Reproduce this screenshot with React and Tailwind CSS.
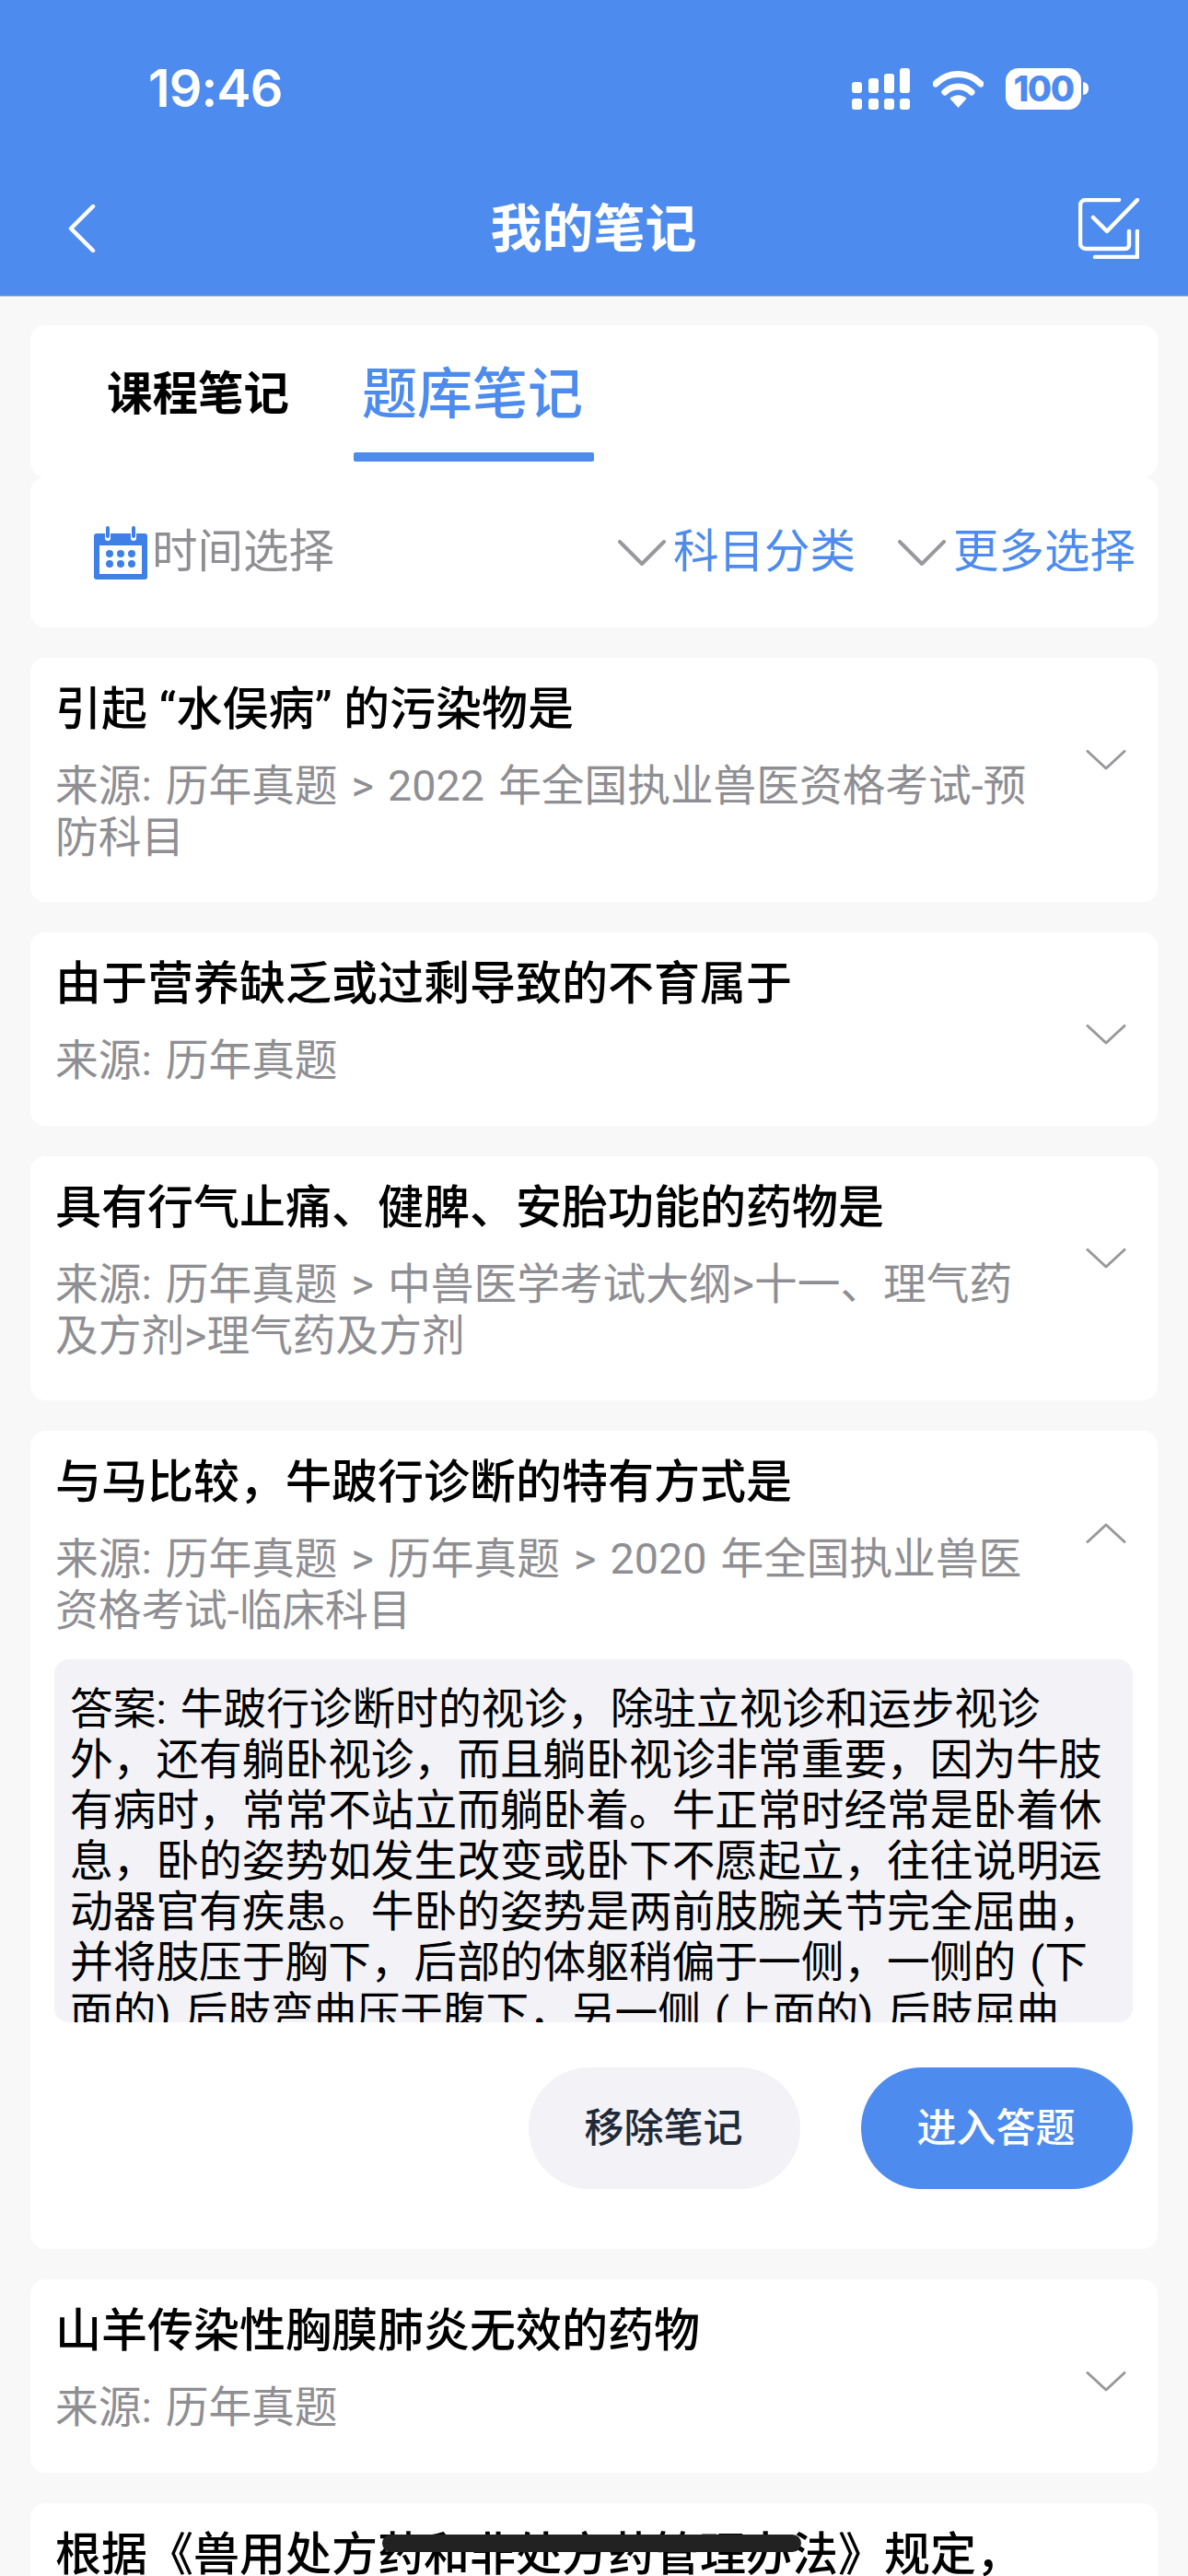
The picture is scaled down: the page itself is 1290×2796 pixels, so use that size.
import React from 'react';

const Chevron = ({ up = false, className = '' }) => (
  <svg viewBox="0 0 44 22" className={`w-[44px] h-[22px] ${className}`} fill="none">
    <path
      d={up ? 'M2 20.5 22 2 42 20.5' : 'M2 1.5 22 20 42 1.5'}
      stroke="#98989d"
      strokeWidth="3"
      strokeLinecap="round"
      strokeLinejoin="round"
    />
  </svg>
);

const SmallChevron = () => (
  <svg viewBox="0 0 52 28" className="w-[52px] h-[28px]" fill="none">
    <path d="M2 2 26 26 50 2" stroke="#98989d" strokeWidth="4" strokeLinecap="round" strokeLinejoin="round" />
  </svg>
);

const SignalIcon = () => (
  <svg viewBox="0 0 63 45" className="w-[63px] h-[45px]" fill="white">
    <rect x="0" y="15" width="11" height="12" rx="3" />
    <rect x="18" y="11" width="11" height="16" rx="3" />
    <rect x="35" y="6" width="11" height="21" rx="3" />
    <rect x="52" y="0" width="11" height="27" rx="3" />
    <rect x="0" y="33" width="11" height="12" rx="3" />
    <rect x="18" y="33" width="11" height="12" rx="3" />
    <rect x="35" y="33" width="11" height="12" rx="3" />
    <rect x="52" y="33" width="11" height="12" rx="3" />
  </svg>
);

const WifiIcon = () => (
  <svg viewBox="0 0 55 41" className="w-[55px] h-[41px]" fill="none">
    <path d="M3 15C17 1 38 1 52 15" stroke="white" strokeWidth="7" strokeLinecap="round" />
    <path d="M13 24C21 16 34 16 42 24" stroke="white" strokeWidth="7" strokeLinecap="round" />
    <path d="M18.5 31C24 26 31 26 36.5 31L27.5 41Z" fill="white" />
  </svg>
);

const BatteryIcon = () => (
  <div className="flex items-center">
    <div className="w-[82px] h-[45px] rounded-[14px] bg-white flex items-center justify-center text-[#4d8bee] text-[38px] font-extrabold leading-none tracking-[-1.5px]">
      100
    </div>
    <div className="w-[6px] h-[14px] ml-[2px] bg-white rounded-r-full" />
  </div>
);

const BackIcon = () => (
  <svg viewBox="0 0 30 52" className="w-[30px] h-[52px]" fill="none">
    <path d="M27 2 3 26 27 50" stroke="white" strokeWidth="4.5" strokeLinecap="round" strokeLinejoin="round" />
  </svg>
);

const CheckIcon = () => (
  <svg viewBox="0 0 66 66" className="w-[66px] h-[66px]" fill="none" stroke="white" strokeWidth="4.5" strokeLinecap="round" strokeLinejoin="round">
    <path d="M44 2H8a6 6 0 0 0-6 6v41a6 6 0 0 0 6 6h43a4 4 0 0 0 4-4V36" />
    <path d="M16 21 31 36 64 2" />
    <path d="M64 36V64H18" />
  </svg>
);

const CalendarIcon = () => (
  <svg viewBox="0 0 58 58" className="w-[58px] h-[58px]">
    <path d="M3 8h9v5a3 3 0 0 0 6 0V8h22v5a3 3 0 0 0 6 0V8h9a3 3 0 0 1 3 3v44a3 3 0 0 1-3 3H3a3 3 0 0 1-3-3V11a3 3 0 0 1 3-3Z" fill="#3f80e6" />
    <rect x="13" y="0" width="4" height="13" rx="2" fill="#3f80e6" />
    <rect x="41" y="0" width="4" height="13" rx="2" fill="#3f80e6" />
    <rect x="6" y="21" width="46" height="31" fill="white" />
    {[17, 29, 41].map((cx) => (
      <React.Fragment key={cx}>
        <circle cx={cx} cy="30" r="4" fill="#3f80e6" />
        <circle cx={cx} cy="41" r="4" fill="#3f80e6" />
      </React.Fragment>
    ))}
  </svg>
);

const NoteCard = ({ title, source, up = false, children }) => (
  <div className="mx-[33px] mt-[33px] bg-white rounded-[16px] pl-[27px] pr-[34px]">
    <div className="flex items-start justify-between">
      <div className="w-[1070px] pt-[28px]">
        <div className="text-[50px] leading-[56px] font-medium text-black">{title}</div>
        <div className="mt-[27px] text-[46.7px] leading-[56px] text-[#8e8e93] [word-spacing:3.5px]">{source}</div>
      </div>
      <Chevron up={up} className="mt-[100px]" />
    </div>
    {children}
  </div>
);

export default function App() {
  return (
    <div className="relative w-[1290px] h-[2796px] overflow-hidden bg-[#f8f8f8] font-['Roboto','Noto_Sans_CJK_SC',sans-serif]">
      {/* Header */}
      <header className="h-[322px] bg-[#4d8bee] border-b border-[#b8c4d8] font-['Inter','Noto_Sans_CJK_SC',sans-serif]">
        <div className="flex items-center justify-between h-[192px] pl-[161px] pr-[108px]">
          <span className="text-[56px] font-semibold text-white tracking-[-1px] leading-none">19:46</span>
          <div className="flex items-center">
            <SignalIcon />
            <div className="ml-[25px]"><WifiIcon /></div>
            <div className="ml-[24px]"><BatteryIcon /></div>
          </div>
        </div>
        <div className="flex items-center justify-between h-[112px] pl-[74px] pr-[53px]">
          <div className="w-[44px]"><BackIcon /></div>
          <span className="text-[56px] font-semibold text-white leading-none">我的笔记</span>
          <CheckIcon />
        </div>
      </header>

      {/* Tabs */}
      <div className="mx-[33px] mt-[31px] h-[165px] bg-white rounded-[16px] relative flex items-center pl-[83px]">
        <span className="text-[49.5px] font-bold text-black leading-none mb-[13px]">课程笔记</span>
        <span className="ml-[79px] text-[60px] font-medium text-[#4d8bee] leading-none mb-[13px]">题库笔记</span>
        <div className="absolute left-[351px] top-[138px] w-[261px] h-[10px] rounded-[2px] bg-[#4d8bee]" />
      </div>

      {/* Filters */}
      <div className="mx-[33px] h-[163px] bg-white rounded-[16px] flex items-center pl-[69px] pr-[24px]">
        <CalendarIcon />
        <span className="ml-[5px] text-[49.5px] text-[#8e8e93] leading-none">时间选择</span>
        <div className="ml-auto flex items-center">
          <SmallChevron />
          <span className="ml-[8px] text-[49.5px] text-[#4d8bee] leading-none">科目分类</span>
          <div className="ml-[46px]"><SmallChevron /></div>
          <span className="ml-[8px] text-[49.5px] text-[#4d8bee] leading-none">更多选择</span>
        </div>
      </div>

      <NoteCard title="引起 “水俣病” 的污染物是" source="来源: 历年真题 > 2022 年全国执业兽医资格考试-预防科目">
        <div className="h-[42px]" />
      </NoteCard>
      <NoteCard title="由于营养缺乏或过剩导致的不育属于" source="来源: 历年真题">
        <div className="h-[43px]" />
      </NoteCard>
      <NoteCard title="具有行气止痛、健脾、安胎功能的药物是" source="来源: 历年真题 > 中兽医学考试大纲>十一、理气药及方剂>理气药及方剂">
        <div className="h-[42px]" />
      </NoteCard>
      <NoteCard up title="与马比较，牛跛行诊断的特有方式是" source="来源: 历年真题 > 历年真题 > 2020 年全国执业兽医资格考试-临床科目">
        <div className="-ml-[1px] mt-[25px] w-[1171px] h-[394px] overflow-hidden rounded-[16px] bg-[#f2f2f7] pt-[27px] pl-[17px] pr-[19px] text-[46.7px] leading-[55px] text-black [word-spacing:3.5px]">
          答案: 牛跛行诊断时的视诊，除驻立视诊和运步视诊外，还有躺卧视诊，而且躺卧视诊非常重要，因为牛肢有病时，常常不站立而躺卧着。牛正常时经常是卧着休息，卧的姿势如发生改变或卧下不愿起立，往往说明运动器官有疾患。牛卧的姿势是两前肢腕关节完全屈曲，并将肢压于胸下，后部的体躯稍偏于一侧，一侧的 (下面的) 后肢弯曲压于腹下，另一侧 (上面的) 后肢屈曲
        </div>
        <div className="mt-[49px] pb-[65px] flex justify-end gap-[66px] -mr-[7px]">
          <button className="w-[295px] h-[132px] rounded-full bg-[#f2f2f7] text-[43px] font-medium text-[#1f2937] pr-[2px]">移除笔记</button>
          <button className="w-[295px] h-[132px] rounded-full bg-[#4d8bee] text-[43px] font-medium text-white pr-[2px]">进入答题</button>
        </div>
      </NoteCard>
      <NoteCard title="山羊传染性胸膜肺炎无效的药物" source="来源: 历年真题">
        <div className="h-[43px]" />
      </NoteCard>
      <NoteCard title="根据《兽用处方药和非处方药管理办法》规定，" source="" />

      {/* Home bar smear over the last row */}
      <div className="absolute left-[415px] top-[2751px] w-[455px] h-[19px] rounded-full bg-[#222222]" />
    </div>
  );
}
